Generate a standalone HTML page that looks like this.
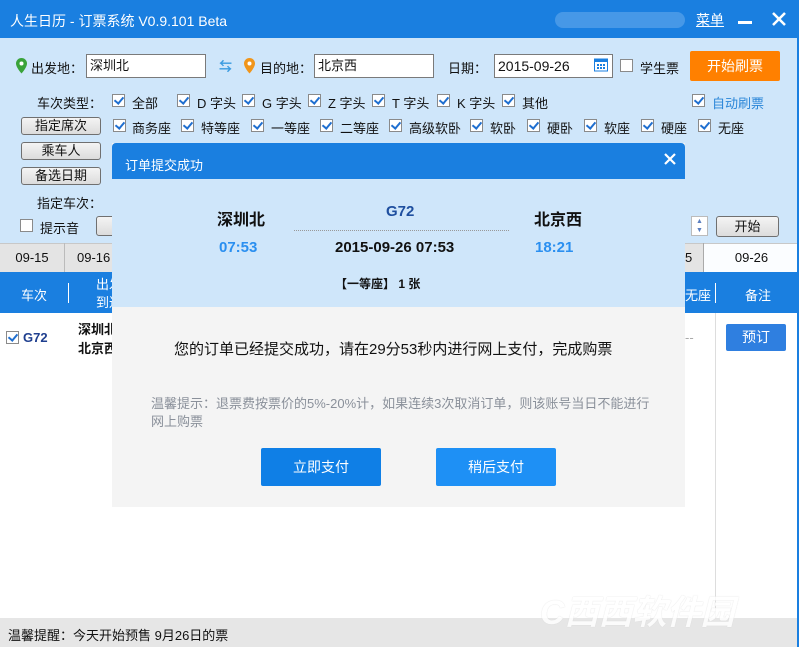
<!DOCTYPE html>
<html><head><meta charset="utf-8"><style>
*{margin:0;padding:0;box-sizing:border-box}
body{width:799px;height:647px;position:relative;overflow:hidden;background:#fff;font-family:"Liberation Sans","Noto Sans CJK SC",sans-serif;font-size:13px;color:#111}
.a{position:absolute;white-space:nowrap}
.cb{position:absolute;width:13px;height:13px;border:1px solid #8a8a8a;background:#fff}
.cb.c::after{content:"";position:absolute;left:3px;top:0px;width:4px;height:7px;border:solid #1f6fd0;border-width:0 2px 2px 0;transform:rotate(40deg)}
.btn{position:absolute;border:1px solid #707070;border-radius:3px;background:linear-gradient(#f4f4f4,#dcdcdc);text-align:center;font-size:13px;line-height:16px}
.inp{position:absolute;height:24px;border:1px solid #7a7a7a;background:#fff;padding-left:3px;line-height:22px;font-size:13px}
</style></head><body>
<div class="a" style="left:0;top:0;width:799px;height:38px;background:#1a7fe0"></div>
<div class="a" style="left:10px;top:11px;color:#fff;font-size:14px">人生日历 - 订票系统 V0.9.101 Beta</div>
<div class="a" style="left:555px;top:12px;width:130px;height:16px;background:#5aa2ea;border-radius:8px;opacity:.7"></div>
<div class="a" style="left:696px;top:10px;color:#fff;font-size:14px;text-decoration:underline">菜单</div>
<div class="a" style="left:738px;top:21px;width:14px;height:3px;background:#fff"></div>
<svg class="a" style="left:772px;top:12px" width="14" height="14"><path d="M1 1L13 13M13 1L1 13" stroke="#fff" stroke-width="2.5"/></svg>
<div class="a" style="left:0;top:38px;width:799px;height:205px;background:#cfe6fa"></div>
<svg class="a" style="left:15px;top:57px" width="13" height="18"><path d="M6.5 1a5.5 5.5 0 0 0-5.5 5.5c0 4 5.5 10 5.5 10s5.5-6 5.5-10A5.5 5.5 0 0 0 6.5 1z" fill="#3aa33a"/><circle cx="6.5" cy="6.5" r="2" fill="#fff"/></svg>
<div class="a" style="left:31px;top:58px">出发地：</div>
<div class="inp" style="left:86px;top:54px;width:120px">深圳北</div>
<div class="a" style="left:219px;top:56px;color:#3a9be0;font-size:13px;font-weight:bold">⇆</div>
<svg class="a" style="left:243px;top:57px" width="13" height="18"><path d="M6.5 1a5.5 5.5 0 0 0-5.5 5.5c0 4 5.5 10 5.5 10s5.5-6 5.5-10A5.5 5.5 0 0 0 6.5 1z" fill="#f0951a"/><circle cx="6.5" cy="6.5" r="2" fill="#fff"/></svg>
<div class="a" style="left:260px;top:58px">目的地：</div>
<div class="inp" style="left:314px;top:54px;width:120px">北京西</div>
<div class="a" style="left:448px;top:58px">日期：</div>
<div class="inp" style="left:494px;top:54px;width:119px;font-size:14px">2015-09-26</div>
<svg class="a" style="left:594px;top:57px" width="14" height="15"><rect x="0.5" y="2" width="13" height="12" fill="#fff" stroke="#1a7fe0"/><rect x="0.5" y="2" width="13" height="3" fill="#1a7fe0"/><path d="M3 7h2v2H3zM6 7h2v2H6zM9 7h2v2H9zM3 10h2v2H3zM6 10h2v2H6zM9 10h2v2H9z" fill="#1a7fe0"/></svg>
<div class="cb" style="left:620px;top:59px"></div>
<div class="a" style="left:640px;top:58px">学生票</div>
<div class="a" style="left:690px;top:51px;width:90px;height:30px;background:#ff8000;border-radius:2px;color:#fff;font-size:14px;text-align:center;line-height:30px">开始刷票</div>

<div class="a" style="left:37px;top:93px">车次类型：</div>
<div class="cb c" style="left:112px;top:94px"></div><div class="a" style="left:132px;top:93px">全部</div>
<div class="cb c" style="left:177px;top:94px"></div><div class="a" style="left:197px;top:93px">D 字头</div>
<div class="cb c" style="left:242px;top:94px"></div><div class="a" style="left:262px;top:93px">G 字头</div>
<div class="cb c" style="left:308px;top:94px"></div><div class="a" style="left:328px;top:93px">Z 字头</div>
<div class="cb c" style="left:372px;top:94px"></div><div class="a" style="left:392px;top:93px">T 字头</div>
<div class="cb c" style="left:437px;top:94px"></div><div class="a" style="left:457px;top:93px">K 字头</div>
<div class="cb c" style="left:502px;top:94px"></div><div class="a" style="left:522px;top:93px">其他</div>
<div class="cb c" style="left:692px;top:94px"></div><div class="a" style="left:712px;top:93px;color:#2a86d8">自动刷票</div>

<div class="btn" style="left:21px;top:117px;width:80px;height:18px">指定席次</div>
<div class="cb c" style="left:113px;top:119px"></div><div class="a" style="left:132px;top:118px">商务座</div>
<div class="cb c" style="left:181px;top:119px"></div><div class="a" style="left:201px;top:118px">特等座</div>
<div class="cb c" style="left:251px;top:119px"></div><div class="a" style="left:271px;top:118px">一等座</div>
<div class="cb c" style="left:320px;top:119px"></div><div class="a" style="left:340px;top:118px">二等座</div>
<div class="cb c" style="left:389px;top:119px"></div><div class="a" style="left:409px;top:118px">高级软卧</div>
<div class="cb c" style="left:470px;top:119px"></div><div class="a" style="left:490px;top:118px">软卧</div>
<div class="cb c" style="left:527px;top:119px"></div><div class="a" style="left:547px;top:118px">硬卧</div>
<div class="cb c" style="left:584px;top:119px"></div><div class="a" style="left:604px;top:118px">软座</div>
<div class="cb c" style="left:641px;top:119px"></div><div class="a" style="left:661px;top:118px">硬座</div>
<div class="cb c" style="left:698px;top:119px"></div><div class="a" style="left:718px;top:118px">无座</div>

<div class="btn" style="left:21px;top:142px;width:80px;height:18px">乘车人</div>
<div class="btn" style="left:21px;top:167px;width:80px;height:18px">备选日期</div>
<div class="a" style="left:37px;top:193px">指定车次：</div>
<div class="cb" style="left:20px;top:219px"></div><div class="a" style="left:40px;top:218px">提示音</div>
<div class="btn" style="left:96px;top:216px;width:20px;height:20px"></div>
<div class="a" style="left:691px;top:216px;width:17px;height:20px;background:#fff;border:1px solid #bbb;font-size:7px;color:#5b7fc0;text-align:center;line-height:9px">▲<br>▼</div>
<div class="btn" style="left:716px;top:216px;width:63px;height:21px;line-height:19px">开始</div>

<div class="a" style="left:0;top:243px;width:799px;height:29px;background:#e4e4e4;border-top:1px solid #c8c8c8"></div>
<div class="a" style="left:0;top:243px;width:65px;height:29px;border-right:1px solid #bbb;text-align:center;line-height:29px">09-15</div>
<div class="a" style="left:65px;top:243px;width:50px;height:29px;padding-left:12px;line-height:29px">09-16</div>
<div class="a" style="left:685px;top:243px;width:19px;height:29px;border-right:1px solid #aaa;line-height:29px">5</div>
<div class="a" style="left:704px;top:244px;width:95px;height:28px;background:#fbfdff;text-align:center;line-height:28px">09-26</div>
<div class="a" style="left:0;top:272px;width:799px;height:41px;background:#1a7fe0"></div>
<div class="a" style="left:21px;top:285px;color:#fff">车次</div>
<div class="a" style="left:68px;top:283px;width:1px;height:20px;background:#fff"></div>
<div class="a" style="left:96px;top:276px;color:#fff;line-height:18px">出发<br>到达</div>
<div class="a" style="left:685px;top:285px;color:#fff">无座</div>
<div class="a" style="left:715px;top:283px;width:1px;height:20px;background:#fff"></div>
<div class="a" style="left:745px;top:285px;color:#fff">备注</div>
<div class="cb c" style="left:6px;top:331px"></div>
<div class="a" style="left:23px;top:330px;color:#1f3f8f;font-weight:bold;font-size:13px">G72</div>
<div class="a" style="left:78px;top:320px;font-weight:bold;line-height:19px">深圳北<br>北京西</div>
<div class="a" style="left:685px;top:330px;color:#aaa">--</div>
<div class="a" style="left:715px;top:313px;width:1px;height:305px;background:#ddd"></div>
<div class="a" style="left:726px;top:324px;width:60px;height:27px;background:#2f7fe0;border-radius:2px;color:#fff;text-align:center;line-height:27px;font-size:14px">预订</div>
<div class="a" style="left:797px;top:38px;width:2px;height:609px;background:#1a7fe0"></div>

<div class="a" style="left:112px;top:143px;width:573px;height:364px;background:#f4f4f4"></div>
<div class="a" style="left:112px;top:143px;width:573px;height:36px;background:#1a7fe0;border-radius:4px 4px 0 0"></div>
<div class="a" style="left:125px;top:155px;color:#fff;font-size:13px">订单提交成功</div>
<svg class="a" style="left:664px;top:153px" width="12" height="12"><path d="M1 1L11 11M11 1L1 11" stroke="#fff" stroke-width="2.2"/></svg>
<div class="a" style="left:112px;top:179px;width:573px;height:128px;background:#cfe6fa"></div>
<div class="a" style="left:217px;top:206px;font-size:16px;font-weight:bold">深圳北</div>
<div class="a" style="left:219px;top:239px;font-size:15px;font-weight:bold;color:#2a8ff0">07:53</div>
<div class="a" style="left:386px;top:203px;font-size:15px;font-weight:bold;color:#1f4f9f">G72</div>
<div class="a" style="left:294px;top:230px;width:215px;border-top:1px dotted #999"></div>
<div class="a" style="left:335px;top:239px;font-size:15px;font-weight:bold">2015-09-26 07:53</div>
<div class="a" style="left:534px;top:206px;font-size:16px;font-weight:bold">北京西</div>
<div class="a" style="left:535px;top:239px;font-size:15px;font-weight:bold;color:#2a8ff0">18:21</div>
<div class="a" style="left:335px;top:275px;font-size:12px;font-weight:bold">【一等座】 1 张</div>
<div class="a" style="left:174px;top:338px;font-size:15px">您的订单已经提交成功，请在29分53秒内进行网上支付，完成购票</div>
<div class="a" style="left:151px;top:395px;font-size:13px;color:#8a909a;line-height:18px">温馨提示：退票费按票价的5%-20%计，如果连续3次取消订单，则该账号当日不能进行<br>网上购票</div>
<div class="a" style="left:261px;top:448px;width:120px;height:38px;background:#0f7fe6;border-radius:2px;color:#fff;text-align:center;line-height:38px;font-size:14px">立即支付</div>
<div class="a" style="left:436px;top:448px;width:120px;height:38px;background:#1e90f5;border-radius:2px;color:#fff;text-align:center;line-height:38px;font-size:14px">稍后支付</div>

<div class="a" style="left:0;top:618px;width:797px;height:29px;background:#e6e6e6"></div>
<div class="a" style="left:8px;top:625px;font-size:13px">温馨提醒：今天开始预售 9月26日的票</div>
<div class="a" style="left:540px;top:585px;font-size:34px;font-weight:bold;color:#fff;text-shadow:0 0 1px #ccc;font-style:italic;opacity:.85">C西西软件园</div>
</body></html>
